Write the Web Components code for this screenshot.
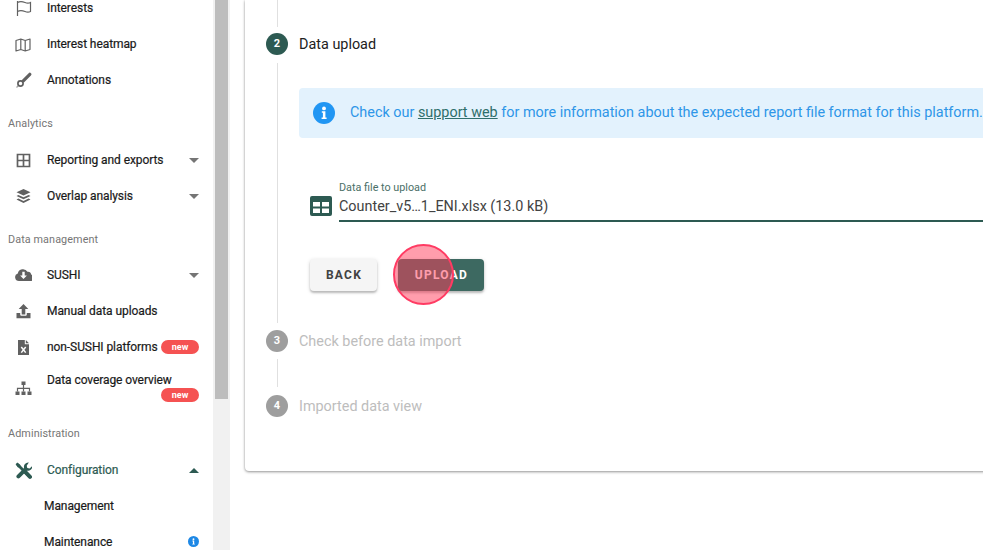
<!DOCTYPE html>
<html lang="en">
<head>
<meta charset="utf-8">
<title>Data upload</title>
<style>
  html, body { margin: 0; height: 100%; overflow: hidden; background: #fff; }
  body { font-family: Roboto, "Liberation Sans", sans-serif; }
</style>
</head>
<body>
<app-shell>
  <side-nav slot="nav">
    <nav-item icon="flag" class="first">Interests</nav-item>
    <nav-item icon="map">Interest heatmap</nav-item>
    <nav-item icon="brush" style="margin-bottom:1px">Annotations</nav-item>
    <nav-heading>Analytics</nav-heading>
    <nav-item icon="table" arrow="down">Reporting and exports</nav-item>
    <nav-item icon="layers" arrow="down">Overlap analysis</nav-item>
    <nav-heading style="padding-top:19px;padding-bottom:10px">Data management</nav-heading>
    <nav-item icon="cloud" arrow="down">SUSHI</nav-item>
    <nav-item icon="upload">Manual data uploads</nav-item>
    <nav-item icon="excel" badge="new">non-SUSHI platforms</nav-item>
    <nav-item icon="sitemap" badge="new" stacked>Data coverage overview</nav-item>
    <nav-heading>Administration</nav-heading>
    <nav-item icon="tools" arrow="up" active>Configuration</nav-item>
    <nav-item sub>Management</nav-item>
    <nav-item sub info>Maintenance</nav-item>
  </side-nav>
  <upload-stepper>
    <step-line height="27" style="margin-top:0"></step-line>
    <step-head number="2" current>Data upload</step-head>
    <step-body>
      <info-alert>Check our <a>support web</a> for more information about the expected report file format for this platform.</info-alert>
      <file-field label="Data file to upload">Counter_v5…1_ENI.xlsx (13.0 kB)</file-field>
      <div style="display:flex;gap:21px;margin-left:11px;margin-top:37px">
        <app-button width="67">BACK</app-button>
        <app-button width="86" primary marker>UPLOAD</app-button>
      </div>
    </step-body>
    <step-head number="3">Check before data import</step-head>
    <step-line height="28" style="margin-top:7px;margin-bottom:8px"></step-line>
    <step-head number="4">Imported data view</step-head>
  </upload-stepper>
</app-shell>

<script>
const ICONS = {
  flag: '<path d="M2.500 1v15M2.500 2.500c3-1.600 5.500-.8 7.500 0s3.500 1 5.500 0v9c-2 1-3.500.8-5.500 0s-4.500-1.600-7.500 0" fill="none" stroke="currentColor" stroke-width="1.200"/>',
  map: '<path d="M1 4.500 5.800 3l4.400 1.500L15 3v10.500L10.200 15l-4.400-1.500L1 15zM5.800 3v10.500M10.200 4.500V15" fill="none" stroke="currentColor" stroke-width="1.200" stroke-linejoin="round"/>',
  brush: '<path d="M14.800 2.300 8.300 8.800" stroke="currentColor" stroke-width="3.200" stroke-linecap="round" fill="none"/><circle cx="5.500" cy="11.500" r="2.600" fill="none" stroke="currentColor" stroke-width="1.700"/><path d="M3.500 13.500 1.500 15.500" stroke="currentColor" stroke-width="1.200" opacity=".6" fill="none"/>',
  table: '<path d="M2.500 2.500h12v12h-12zM8.500 2.500v12M2.500 8.500h12" fill="none" stroke="currentColor" stroke-width="1.700"/>',
  layers: '<path d="M8.500 1 15.500 4.300 8.500 7.600 1.500 4.300z"/><path d="M3.400 6.900 1.500 7.900l7 3.300 7-3.300-1.900-1-5.100 2.400z"/><path d="M3.400 10.500l-1.900 1 7 3.500 7-3.500-1.900-1-5.100 2.500z"/>',
  cloud: '<path d="M4.500 14.500a3.900 3.900 0 0 1-1.200-7.600A5.300 5.300 0 0 1 13 5.200 3.200 3.200 0 0 1 16.600 8 3.400 3.400 0 0 1 17 14.500z" transform="translate(-.500 -.500)"/><path d="M7.300 4.800h2.400v3.700h2.200L8.500 12 5.100 8.500h2.200z" fill="#fff"/>',
  upload: '<path d="M8.500 1 13.300 6H10.300v5.500H6.700V6H3.700z"/><path d="M1.500 10h3.700v1.200c0 1 .6 1.600 1.500 1.600h3.600c.9 0 1.500-.6 1.500-1.600V10h3.700v5.200h-14z"/>',
  excel: '<path d="M3 1h6.800v4.200H14V16H3z"/><path d="M10.800 1 14 4.200h-3.200z"/><path d="M6.300 8 10.700 13.600M10.700 8 6.300 13.600" stroke="#fff" stroke-width="1.500" fill="none"/>',
  sitemap: '<path d="M6.500 1.500h4v3.600h-4zM.5 11.500h4v3.600h-4zM6.500 11.500h4v3.600h-4zM12.500 11.500h4v3.600h-4z"/><path d="M8.500 5v6.500M2.500 11.500V8.300h12v3.200" fill="none" stroke="currentColor" stroke-width="1.200"/>',
  tools: '<path d="M2.500 2.500 14 14" stroke="currentColor" stroke-width="2.800" fill="none"/><path d="M.6 2.300 2.300.6l3.400 2.600-2.500 2.500z"/><path d="M10.200 9.800 15 14.800" stroke="currentColor" stroke-width="4" stroke-linecap="round" fill="none"/><path d="M13.800.6a4.300 4.300 0 0 0-4.700 5.500L1.800 13.200a2 2 0 0 0 2.800 2.800l7.300-7.300a4.300 4.300 0 0 0 5.300-4.600l-2.600 2.500-2.300-.6-.6-2.300z"/>',
  grid: '<path fill-rule="evenodd" d="M2 0h18a2 2 0 0 1 2 2v16a2 2 0 0 1-2 2H2a2 2 0 0 1-2-2V2a2 2 0 0 1 2-2zm1 6v4.500h7V6zm9 0v4.500h7V6zM3 12.500V17h7v-4.500zm9 0V17h7v-4.500z"/>'
};

function infoDisc(size, color) {
  return `<svg width="${size}" height="${size}" viewBox="0 0 22 22" aria-hidden="true">
    <circle cx="11" cy="11" r="11" fill="${color}"/>
    <circle cx="11" cy="6.400" r="1.900" fill="#fff"/>
    <path d="M8.800 9.200h3.600v6.200h1.200v1.600H8.600v-1.600h1.300v-4.600H8.800z" fill="#fff"/>
  </svg>`;
}

function define(name, css, html, setup) {
  customElements.define(name, class extends HTMLElement {
    connectedCallback() {
      if (this.shadowRoot) return;
      const root = this.attachShadow({ mode: 'open' });
      root.innerHTML = `<style>${css}</style>` + (typeof html === 'function' ? html(this) : html);
      if (setup) setup(this, root);
    }
  });
}

define('app-shell', `
  :host { display: grid; grid-template-columns: 213px 17px 1fr; height: 550px; overflow: hidden; }
  .track { background: #f1f1f1; padding: 0 2px; }
  .thumb { height: 399px; background: #bdbdbd; }
  main { padding-left: 15px; min-width: 0; overflow: hidden; }
`, `<slot name="nav"></slot><div class="track"><div class="thumb"></div></div><main><slot></slot></main>`);

define('side-nav', `
  :host { display: block; background: #fff; height: 550px; overflow: hidden; }
  .inner { margin-top: -10px; }
`, `<div class="inner"><slot></slot></div>`);

define('nav-heading', `
  :host { display: block; padding: 18px 8px 11px; font-size: 10.800px; line-height: 14px; color: #757575; letter-spacing: .1px; }
`, `<slot></slot>`);

define('nav-item', `
  :host { display: flex; align-items: center; height: 36px; padding-right: 14px; font-size: 12px; font-weight: 400; letter-spacing: -.08px; color: #1a1a1a; -webkit-text-stroke: .2px currentColor; position: relative; }
  :host([active]) { color: #2d5a52; }
  :host([sub]) { padding-left: 44px; }
  :host([stacked]) { height: 44px; align-items: flex-start; }
  .ic { width: 17px; height: 17px; margin-left: 15px; margin-right: 15px; flex: none; color: #616161; }
  :host([active]) .ic { color: #2d5a52; }
  :host([stacked]) .ic { margin-top: 15px; }
  .label { flex: 1; white-space: nowrap; line-height: 14px; }
  :host([stacked]) .label { margin-top: 8px; }
  .arrow { width: 0; height: 0; border-left: 5px solid transparent; border-right: 5px solid transparent; }
  .down { border-top: 5px solid #757575; margin-top: 1px; }
  .up { border-bottom: 5px solid #2d5a52; margin-top: 1px; }
  .badge { flex: none; width: 38px; height: 14px; border-radius: 7px; background: #f55252; color: #fff; font-size: 9px; font-weight: 700; letter-spacing: 0; line-height: 14px; text-align: center; -webkit-text-stroke: 0; }
  :host([stacked]) .badge { position: absolute; right: 14px; top: 23px; }
  .info { display: flex; margin: -2px 0 0; }
`, el => {
  const icon = el.getAttribute('icon');
  const arrow = el.getAttribute('arrow');
  return (icon ? `<svg class="ic" viewBox="0 0 17 17" fill="currentColor" aria-hidden="true">${ICONS[icon]}</svg>` : '')
    + `<span class="label"><slot></slot></span>`
    + (arrow ? `<span class="arrow ${arrow}"></span>` : '')
    + (el.hasAttribute('badge') ? `<span class="badge">${el.getAttribute('badge')}</span>` : '')
    + (el.hasAttribute('info') ? `<span class="info">${infoDisc(11, '#1e88e5')}</span>` : '');
});

define('upload-stepper', `
  :host { display: flex; flex-direction: column; width: 900px; height: 471px; box-sizing: border-box; padding-left: 21px; border-radius: 0 0 4px 4px; background: #fff;
    box-shadow: 0 1px 3px rgba(0,0,0,.4), 0 0 2px rgba(0,0,0,.12); }
`, `<slot></slot>`);

define('step-line', `
  :host { display: block; width: 1px; margin: 8px 0 6px 11px; background: #e0e0e0; }
`, '', el => { el.style.height = el.getAttribute('height') + 'px'; });

define('step-head', `
  :host { display: flex; align-items: center; gap: 11px; height: 22px; font-size: 14.400px; color: #bdbdbd; }
  :host([current]) { color: #212121; }
  .num { width: 22px; height: 22px; border-radius: 50%; background: #9e9e9e; color: #fff; font-size: 11px; font-weight: 700; line-height: 22px; text-align: center; flex: none; }
  :host([current]) .num { background: #2d5a52; }
`, el => `<span class="num">${el.getAttribute('number')}</span><span><slot></slot></span>`);

define('step-body', `
  :host { display: block; box-sizing: border-box; height: 260px; margin: 8px 0 7px 11px; padding: 25px 0 0 21px; border-left: 1px solid #e0e0e0; }
`, `<slot></slot>`);

define('info-alert', `
  :host { display: flex; align-items: center; height: 50px; width: 800px; box-sizing: border-box; padding-left: 14px; gap: 15px; background: #e3f2fd; border-radius: 4px; font-size: 14.400px; color: #2e96e8; white-space: nowrap; }
  svg { flex: none; }
  span { margin-top: -1px; }
  ::slotted(a) { color: #2f6f6b; text-decoration: underline; }
`, `${infoDisc(22, '#2196f3')}<span><slot></slot></span>`);

define('file-field', `
  :host { display: flex; margin: 43px 0 0 11px; width: 789px; }
  svg { flex: none; margin: 15px 7px 0 0; color: #2d5a52; }
  .box { flex: 1; border-bottom: 2px solid #2d5a52; height: 41px; box-sizing: border-box; padding-top: 1px; }
  .lab { font-size: 10.800px; line-height: 12px; color: #4a6f68; }
  .val { font-size: 14.400px; line-height: 20px; margin-top: 3px; color: #424242; }
`, el => `<svg width="22" height="20" viewBox="0 0 22 20" fill="currentColor" aria-hidden="true">${ICONS.grid}</svg>
  <div class="box"><div class="lab">${el.getAttribute('label')}</div><div class="val"><slot></slot></div></div>`);

define('app-button', `
  :host { display: block; position: relative; }
  .btn { display: flex; align-items: center; justify-content: center; height: 32px; padding-left: 1px; box-sizing: border-box; border-radius: 4px; background: #f5f5f5; color: #424242; font-size: 12px; font-weight: 700; letter-spacing: 1.250px;
    box-shadow: 0 2px 2px rgba(0,0,0,.2), 0 1px 4px rgba(0,0,0,.14); }
  :host([primary]) .btn { background: #3d6961; color: #fff; }
  .mark { position: absolute; left: -5px; top: -15px; width: 61px; height: 61px; box-sizing: border-box; border-radius: 50%; border: 2.500px solid #ff3b63; background: rgba(255,60,90,.5); }
`, el => `<div class="btn" style="width:${el.getAttribute('width')}px"><slot></slot></div>` + (el.hasAttribute('marker') ? '<div class="mark"></div>' : ''));
</script>
</body>
</html>
